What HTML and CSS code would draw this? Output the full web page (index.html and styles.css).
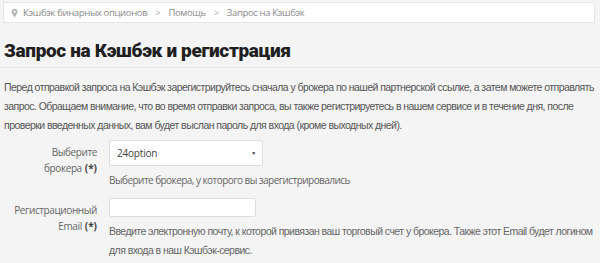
FILE: index.html
```html
<!DOCTYPE html>
<html lang="ru">
<head>
<meta charset="utf-8">
<link rel="stylesheet" href="styles.css">
</head>
<body>
<nav class="crumbs">
  <svg class="pin" width="7" height="10" viewBox="0 0 8 11"><path d="M4 0.5C2 0.5 0.6 2 0.6 3.8 0.6 6.3 4 10.5 4 10.5S7.4 6.3 7.4 3.8C7.4 2 6 0.5 4 0.5Z" fill="#b5b5b5"/><circle cx="4" cy="3.8" r="1.3" fill="#fff"/></svg>
  <span>Кэшбэк бинарных опционов</span>
  <span class="sep">&gt;</span>
  <span>Помощь</span>
  <span class="sep">&gt;</span>
  <span>Запрос на Кэшбэк</span>
</nav>
<h1 class="title">Запрос на Кэшбэк и регистрация</h1>
<p class="intro">Перед отправкой запроса на Кэшбэк зарегистрируйтесь сначала у брокера по нашей партнерской ссылке, а затем можете отправлять запрос. Обращаем внимание, что во время отправки запроса, вы также регистрируетесь в нашем сервисе и в течение дня, после проверки введенных данных, вам будет выслан пароль для входа (кроме выходных дней).</p>
<form class="form">
  <div class="row">
    <label class="lbl"><span class="lt">Выберите</span><span class="lt">брокера<b>(*)</b></span></label>
    <div class="ctl">
      <div class="select"><span>24option</span><span class="arrow">▼</span></div>
      <div class="help">Выберите брокера, у которого вы зарегистрировались</div>
    </div>
  </div>
  <div class="row row2">
    <label class="lbl"><span class="lt">Регистрационный</span><span class="lt">Email<b>(*)</b></span></label>
    <div class="ctl">
      <div class="input"></div>
      <div class="help help2">Введите электронную почту, к которой привязан ваш торговый счет у брокера. Также этот Email будет логином для входа в наш Кэшбэк-сервис.</div>
    </div>
  </div>
</form>
</body>
</html>
```
FILE: styles.css
```css
html, body { margin: 0; padding: 0; }
body {
  background: #f4f4f4;
  font-family: "Open Sans", "Liberation Sans", sans-serif;
  color: #555;
  width: 600px;
  height: 263px;
  overflow: hidden;
}
.crumbs {
  margin: 2px 5px 0 3px;
  height: 21px;
  box-sizing: border-box;
  background: #fff;
  border: 1px solid #e6e6e6;
  display: flex;
  align-items: center;
  padding-left: 7px;
  font-size: 9.5px;
  letter-spacing: -0.35px;
  color: #8a8a8a;
  white-space: nowrap;
}
.pin { margin-right: 5px; }
.sep { margin: 0 8px; color: #aaa; font-size: 9.5px; }
.title {
  margin: 0;
  padding: 16px 0 4px 4px;
  font-family: "Roboto", sans-serif;
  font-weight: 900;
  font-size: 19px;
  line-height: 24px;
  color: #1f1f1f;
  letter-spacing: -0.35px;
  border-bottom: 1px solid #e8e8e8;
}
.intro {
  margin: 10px 6px 0 4px;
  font-family: "Liberation Sans", sans-serif;
  font-size: 10.5px;
  letter-spacing: -0.55px;
  line-height: 19px;
  color: #555;
}
.form { margin-top: 5px; }
.row { display: flex; gap: 12px; }
.row2 { margin-top: 8px; }
.lbl {
  width: 80px;
  margin-left: 17px;
  display: flex;
  flex-direction: column;
  align-items: flex-end;
  font-size: 10px;
  line-height: 16px;
  color: #666;
  padding-top: 4px;
}
.lt { letter-spacing: -0.4px; white-space: nowrap; }
.lbl b { color: #444; letter-spacing: 0; margin-left: 3px; }
.ctl { flex: 1; }
.select {
  height: 26px;
  background: #fff;
  border: 1px solid #ddd;
  border-radius: 2px;
  display: flex;
  align-items: center;
  justify-content: space-between;
  padding: 0 6px 0 7px;
  box-sizing: border-box;
  width: 154px;
  font-size: 10px;
  letter-spacing: -0.2px;
  color: #444;
}
.arrow { font-size: 5px; color: #333; }
.input {
  width: 147px;
  height: 19px;
  background: #fff;
  border: 1px solid #ddd;
  border-radius: 2px;
  box-sizing: border-box;
}
.help {
  margin-top: 5px;
  font-size: 10px;
  letter-spacing: -0.55px;
  line-height: 19px;
  color: #666;
}
.help2 { margin-top: 5px; font-family: "Liberation Sans", sans-serif; font-size: 10.5px; letter-spacing: -0.55px; }
```
